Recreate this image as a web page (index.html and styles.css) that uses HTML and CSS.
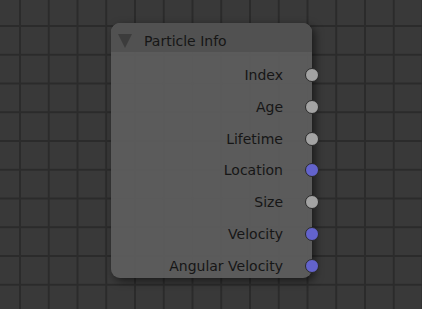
FILE: index.html
```html
<!DOCTYPE html>
<html>
    <head>
        <title>Particle Info Node</title>
        <link rel="stylesheet" href="styles.css">
    </head>
    <body>
        <!-- Node editor canvas -->
        <div class="canvas">
            <div class="node">
                <!-- Node header -->
                <div class="node-header">
                    <span class="collapse"></span>
                    <span class="node-title">Particle Info</span>
                </div>
                <!-- Output sockets -->
                <div class="node-body">
                    <div class="row">Index<span class="socket grey"></span></div>
                    <div class="row">Age<span class="socket grey"></span></div>
                    <div class="row">Lifetime<span class="socket grey"></span></div>
                    <div class="row">Location<span class="socket blue"></span></div>
                    <div class="row">Size<span class="socket grey"></span></div>
                    <div class="row">Velocity<span class="socket blue"></span></div>
                    <div class="row">Angular Velocity<span class="socket blue"></span></div>
                </div>
            </div>
        </div>
    </body>
</html>
```

FILE: styles.css
```css
body {
    margin: 0;
    font-family: "DejaVu Sans", sans-serif;
}

.canvas {
    position: relative;
    width: 422px;
    height: 309px;
    background-color: #393939;
    background-image:
        linear-gradient(to right, #2b2b2b 2px, transparent 2px),
        linear-gradient(to bottom, #2b2b2b 2px, transparent 2px);
    background-size: 28.75px 28.75px;
    background-position: 19px 25px;
    overflow: hidden;
}

.node {
    position: absolute;
    left: 111px;
    top: 23px;
    width: 201px;
    height: 255px;
    border-radius: 9px;
    background-color: rgba(94, 94, 94, 0.92);
    box-shadow: 3px 3px 8px rgba(0, 0, 0, 0.55);
}

.node-header {
    display: flex;
    align-items: center;
    box-sizing: border-box;
    height: 29px;
    padding-top: 6px;
    padding-left: 7px;
    border-radius: 9px 9px 0 0;
    background-color: rgba(80, 80, 80, 0.92);
}

.collapse {
    width: 0;
    height: 0;
    border-left: 7px solid transparent;
    border-right: 7px solid transparent;
    border-top: 14px solid #3c3c3c;
    margin-right: 12px;
}

.node-title {
    font-size: 14px;
    color: #161616;
}

.node-body {
    display: flex;
    flex-direction: column;
    gap: 7.8px;
    padding-top: 11px;
}

.row {
    position: relative;
    height: 24px;
    line-height: 24px;
    text-align: right;
    padding-right: 29px;
    font-size: 14px;
    color: #161616;
}

.socket {
    position: absolute;
    right: -7px;
    top: 5px;
    width: 12px;
    height: 12px;
    border-radius: 50%;
    border: 1px solid #2a2a2a;
}

.grey {
    background-color: #a3a3a3;
}

.blue {
    background-color: #6363cc;
}
```
